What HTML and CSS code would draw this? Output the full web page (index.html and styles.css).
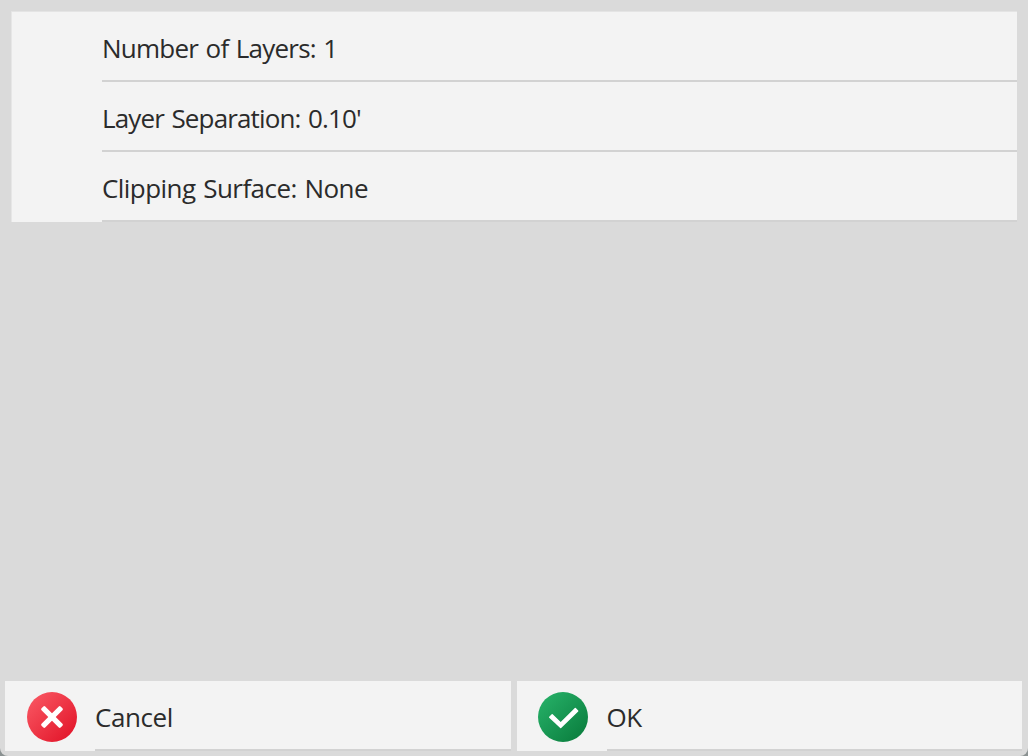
FILE: index.html
```html
<!DOCTYPE html>
<html lang="en">
<head>
<meta charset="utf-8">
<title>Layers</title>
<link rel="stylesheet" href="styles.css">
</head>
<body>
<main class="screen">
  <section class="list">
    <div class="row"><span class="label label-count">Number of Layers: 1</span></div>
    <div class="row"><span class="label label-separation">Layer Separation: 0.10'</span></div>
    <div class="row"><span class="label label-clipping">Clipping Surface: None</span></div>
  </section>
  <footer class="actions">
    <button class="action">
      <svg class="icon icon-cancel" viewBox="0 0 50 50"><defs><linearGradient id="r" x1="0.1" y1="0.1" x2="0.9" y2="0.9"><stop offset="0" stop-color="#f85460"/><stop offset="1" stop-color="#e3172b"/></linearGradient></defs><circle cx="25" cy="25" r="25" fill="url(#r)"/><g transform="rotate(45 25 25)" fill="#fff"><rect x="11.500" y="22.400" width="27" height="5.200" rx="1.300"/><rect x="22.400" y="11.500" width="5.200" height="27" rx="1.300"/></g></svg>
      <span class="caption">Cancel</span>
    </button>
    <button class="action">
      <svg class="icon" viewBox="0 0 50 50"><defs><linearGradient id="g" x1="0.1" y1="0.1" x2="0.9" y2="0.9"><stop offset="0" stop-color="#25ae66"/><stop offset="1" stop-color="#0b7f3f"/></linearGradient></defs><circle cx="25" cy="25" r="25" fill="url(#g)"/><path d="M11.700 25.300L14.200 22.700L22.700 31L37.300 16.600L39.700 19L22.700 35.600Z" fill="#fff" stroke="#fff" stroke-width="1.400" stroke-linejoin="round"/></svg>
      <span class="caption">OK</span>
    </button>
  </footer>
</main>
</body>
</html>
```
FILE: styles.css
```css
* { box-sizing: border-box; }
body { margin: 0; background: #8b9292; color: #2b2b2b; font: 26px/34px "Open Sans", "Noto Sans", sans-serif; }
.screen { height: 756px; display: flex; flex-direction: column; justify-content: space-between; padding: 12px 5px 5px; background: #dadada; border-radius: 0 0 8px 8px; }
.list { margin: 0 6px; padding-left: 91px; background: linear-gradient(90deg, #e6e6e6 1px, #f3f3f3 1px); box-shadow: 0 -1px 0 #e4e4e4; }
.row { height: 70px; display: flex; align-items: center; border-bottom: 2px solid #d2d2d2; padding-top: 3px; }
.label { white-space: nowrap; word-spacing: 1.5px; }
.label-count { letter-spacing: -0.78px; }
.label-separation { letter-spacing: -0.85px; }
.label-clipping { letter-spacing: -0.55px; }
.actions { display: grid; grid-template-columns: 505.5px 505.5px; gap: 6px; }
.action { height: 70px; border: 0; padding: 0 0 0 21px; display: flex; align-items: stretch; gap: 19px; background: #f3f3f3; color: inherit; font: inherit; text-align: left; }
.icon { width: 50px; height: 50px; margin-top: 11px; flex: none; }
.icon-cancel { margin-left: 0.5px; margin-right: -0.5px; }
.caption { flex: 1; display: flex; align-items: center; padding-top: 3px; border-bottom: 2px solid #d2d2d2; letter-spacing: -0.4px; }
```
